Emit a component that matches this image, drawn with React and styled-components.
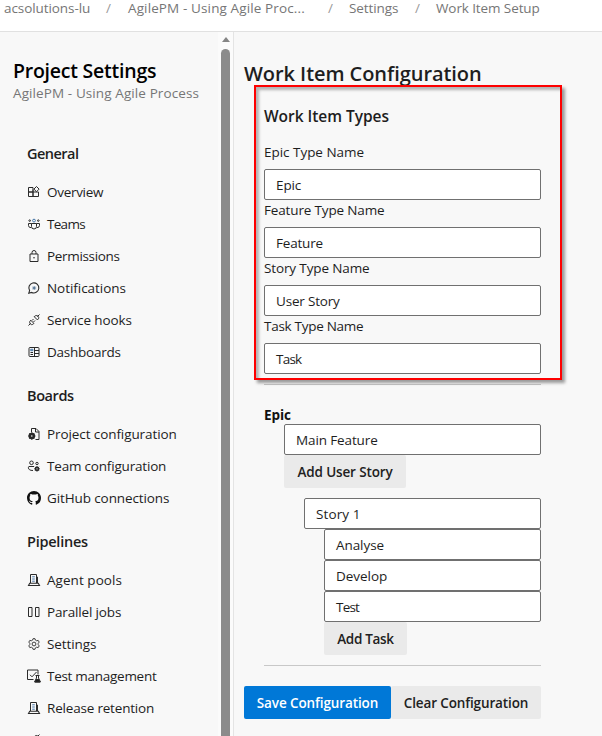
import React from 'react';
import styled, { createGlobalStyle, css } from 'styled-components';

const GlobalStyle = createGlobalStyle`
  * { box-sizing: border-box; }
  html, body { margin: 0; padding: 0; height: 100%; overflow: hidden; }
  body {
    background: #f8f8f8;
    color: #1e1e1e;
    font-family: "Open Sans", "Noto Sans", sans-serif;
    font-size: 13.5px;
    line-height: 20px;
  }
`;

const Page = styled.div`
  display: flex;
  flex-direction: column;
  height: 736px;
  width: 602px;
  overflow: hidden;
`;

const Text = styled.span`
  letter-spacing: ${(p) => p.$track || 0}px;
  white-space: pre;
`;

/* ---- breadcrumb ---- */
const Breadcrumb = styled.nav`
  display: flex;
  flex: none;
  height: 32px;
  padding: 0 0 0 4px;
  background: #fff;
  border-bottom: 1px solid #e1e1e1;
  color: #767676;
  line-height: 16px;
`;
const Crumb = styled(Text)`
  flex: none;
  width: ${(p) => p.$width}px;
`;
const Slash = styled.span`
  flex: none;
  width: ${(p) => p.$width}px;
  color: #9a9a9a;
`;

const Body = styled.div`
  display: flex;
  flex: 1;
  min-height: 0;
`;

/* ---- sidebar ---- */
const Sidebar = styled.aside`
  display: flex;
  flex: none;
  width: 234px;
  border-right: 1px solid #e4e4e4;
`;
const SideContent = styled.div`
  flex: 1;
  min-width: 0;
  overflow: hidden;
  padding: 27px 0 0 13px;
`;
const SideTitle = styled.h2`
  margin: 0;
  font-size: 19.5px;
  font-weight: 600;
  line-height: 24px;
  color: #000;
`;
const SideSubtitle = styled.div`
  color: #767676;
  line-height: 20px;
`;
const Nav = styled.div`
  padding-top: 23px;
`;
const GroupTitle = styled.h3`
  margin: 12px 0 6px;
  padding-left: 14px;
  font-size: 14.5px;
  font-weight: 600;
  line-height: 32px;
`;
const NavItem = styled.div`
  display: flex;
  align-items: center;
  height: 32px;
  padding-left: 14px;
  gap: 6px;
`;
const IconBox = styled.svg`
  flex: none;
  width: 14px;
  height: 14px;
  overflow: visible;
  fill: none;
  stroke: #2b2b2b;
  stroke-width: 1;
`;
const Scrollbar = styled.div`
  display: flex;
  flex-direction: column;
  align-items: center;
  flex: none;
  width: 15px;
  background: #fbfbfb;
`;
const ArrowUp = styled.div`
  width: 0;
  height: 0;
  margin: 5px 0 7px;
  border: 4.5px solid transparent;
  border-top: 0;
  border-bottom: 5px solid #858585;
`;
const Thumb = styled.div`
  flex: 1;
  width: 9px;
  border-radius: 5px 5px 0 0;
  background: #8b8b8b;
`;

/* ---- main ---- */
const Main = styled.main`
  flex: 1;
  padding: 28px 0 0 10px;
`;
const PageTitle = styled.h1`
  margin: 0;
  font-size: 20px;
  font-weight: 600;
  line-height: 28px;
`;
const Form = styled.div`
  width: 297px;
  padding-left: 20px;
`;
const Types = styled.section`
  position: relative;
  padding-top: 18px;
`;
const Highlight = styled.div`
  position: absolute;
  left: -10px;
  top: -3px;
  width: 308px;
  height: 295px;
  border: 2px solid #fe0000;
  box-shadow: 3px 3px 3px rgba(0, 0, 0, 0.38), inset 3px 3px 3px rgba(0, 0, 0, 0.28);
  pointer-events: none;
`;
const SectionTitle = styled.h2`
  margin: 0 0 16px;
  font-size: 15.5px;
  font-weight: 600;
  line-height: 20px;
`;
const Label = styled.div`
  height: 27px;
  line-height: 21px;
`;
const Input = styled.div`
  height: 31px;
  padding-left: 11px;
  border: 1px solid #707070;
  border-radius: 2px;
  background: #fff;
  line-height: 30px;
`;
const Rule = styled.hr`
  height: 1px;
  margin: 10px 0 0;
  border: 0;
  background: #c8c8c8;
`;
const EpicName = styled.div`
  height: 39px;
  padding-top: 20px;
  font-weight: 700;
  color: #111;
`;
const Indent = styled.div`
  margin-top: ${(p) => p.$gap || 0}px;
  padding-left: 20px;
`;
const Button = styled.button`
  display: block;
  width: ${(p) => p.$width}px;
  height: 33px;
  margin: 0;
  padding: 2px 0 0;
  border: 0;
  border-radius: 2px;
  background: #eaeaea;
  color: #212121;
  font: 600 13.5px/31px "Open Sans", "Noto Sans", sans-serif;
  text-align: center;
  ${(p) =>
    p.$primary &&
    css`
      background: #0078d7;
      color: #fff;
    `}
`;
const Actions = styled.div`
  display: flex;
  margin-top: 20px;
`;

const server = (
  <>
    <path d="M3.500 10V1.500h6V10M9.500 4h1v6" />
    <path d="M5.200 3.800h2.600M5.200 6h2.600M5.200 8.200h2.600" stroke="#4777a8" />
    <path d="M1.500 12.500l1.200-2.300h8.600l1.200 2.300z" strokeWidth="1.100" />
  </>
);
const gearTeeth =
  'M6 1.700L8 1.700 8.400 3.100 9.700 3.800 11.200 3.400 12.200 5.100 11.200 6.300V7.700L12.200 8.900 11.200 10.600 9.700 10.200 8.400 10.900 8 12.300H6L5.600 10.900 4.300 10.200 2.800 10.600 1.800 8.900 2.800 7.700V6.300L1.800 5.100 2.800 3.400 4.300 3.800 5.600 3.100z';

const icons = {
  overview: (
    <path d="M1.500 2.500h4.500v4.500h-4.500zM1.500 7h4.500v4.500h-4.500zM6 7h5.500v4.500H6zM6 4.500V7M9.500 1.500l2.600 2.600-2.600 2.600-2.600-2.600z" />
  ),
  teams: (
    <>
      <path d="M4.500 6.500h5v3a2.500 2.500 0 0 1-5 0zM4.500 6.500H1.500v2q0 2.200 2.700 2.200M9.500 6.500h3v2q0 2.200-2.700 2.200" />
      <circle cx="7" cy="3.600" r="1.400" stroke="#4777a8" />
      <circle cx="2.700" cy="3.600" r=".8" />
      <circle cx="11.300" cy="3.600" r=".8" />
    </>
  ),
  lock: (
    <>
      <path d="M3 5h8v7.500H3zM5 5V3.500a2 2 0 0 1 4 0V5" />
      <circle cx="7" cy="8.800" r=".8" fill="#2b2b2b" stroke="none" />
    </>
  ),
  bell: (
    <>
      <path d="M1.800 12.200l.8-2.600a5 5 0 1 1 2 1.800z" strokeWidth="1.100" />
      <path d="M7.200 5v4M5.200 7h4M5.900 5.700l2.600 2.600M8.500 5.700L5.900 8.300" strokeWidth=".8" stroke="#4d6f93" />
    </>
  ),
  plug: (
    <path d="M1.500 12.500l2-2M10.500 3.500l2-2M3.700 7.200l3.200 3.200-1.200 1q-1.300.7-2.400-.5-1-1.200-.5-2.400zM7.200 3.700l3.200 3.200 1.100-1.200q.7-1.300-.5-2.500-1.200-1-2.500-.5zM5 7.500l1.500-1.500M6.500 9L8 7.500" />
  ),
  dashboard: (
    <>
      <rect x="2" y="2.500" width="10" height="9" rx="1" />
      <path d="M7.500 2.500v9M7.500 5.500H12M7.500 8.500H12M3.500 7.500h2.500M3.500 9.500h2.500" />
      <path d="M3.700 4.300h2.200v1.400H3.700z" stroke="#4777a8" />
    </>
  ),
  project: (
    <>
      <path d="M4.500 5V1.500H9l3 3v8H8.500M8.500 1.500V5H12" />
      <circle cx="4.800" cy="9" r="2.300" strokeWidth="2" />
      <path d="M4.800 5.300v7.400M1.100 9h7.400M2.300 6.500l5 5M7.300 6.500l-5 5" strokeWidth="1.200" />
      <circle cx="4.800" cy="9" r=".8" fill="#f8f8f8" stroke="none" />
    </>
  ),
  team: (
    <>
      <circle cx="4.500" cy="3.800" r="1.800" />
      <circle cx="10" cy="4.500" r="1.200" />
      <path d="M7 7.500H2q-.6 0-.6 1.200Q1.500 11.500 6 11.500" />
      <circle cx="10" cy="9.800" r="1.600" strokeWidth="1.500" />
      <path d="M10 7v5.600M7.200 9.800h5.600M8 7.800l4 4M12 7.800l-4 4" strokeWidth=".9" />
      <circle cx="10" cy="9.800" r=".6" fill="#f8f8f8" stroke="none" />
    </>
  ),
  github: (
    <path
      transform="scale(.875)"
      fill="#111"
      stroke="none"
      d="M8 0C3.580 0 0 3.580 0 8c0 3.540 2.290 6.530 5.470 7.590.4.070.55-.17.55-.38 0-.19-.01-.82-.01-1.490-2.010.37-2.530-.49-2.690-.94-.09-.23-.48-.94-.82-1.130-.28-.15-.68-.52-.01-.53.63-.01 1.080.58 1.230.82.72 1.210 1.870.87 2.330.66.070-.52.28-.87.51-1.070-1.780-.2-3.640-.89-3.640-3.950 0-.87.31-1.590.82-2.150-.08-.2-.36-1.020.08-2.120 0 0 .67-.21 2.200.82.64-.18 1.320-.27 2-.27s1.360.09 2 .27c1.530-1.040 2.200-.82 2.200-.82.44 1.100.16 1.920.08 2.120.51.56.82 1.270.82 2.150 0 3.070-1.870 3.750-3.650 3.950.29.25.54.73.54 1.480 0 1.070-.01 1.930-.01 2.200 0 .21.15.46.55.38A8.010 8.010 0 0 0 16 8c0-4.420-3.580-8-8-8z"
    />
  ),
  server,
  parallel: <path d="M1.500 2.500h3.500v9h-3.500zM8.500 2.500h3.500v9h-3.500z" />,
  gear: (
    <>
      <path d={gearTeeth} strokeWidth=".9" />
      <circle cx="7" cy="7" r="1.900" strokeWidth=".9" />
    </>
  ),
  test: (
    <>
      <path d="M6.500 10.500H.5V1h10.500v4.500M3 5.800l2 2L9.500 3" />
      <path d="M8.500 6.500h4M9.500 6.500v2.500l-2 4h6l-2-4V6.500" />
      <path d="M9 10.500h3l1 2.500H8z" fill="#1e1e1e" />
    </>
  ),
};

const groups = [
  {
    title: 'General', track: -0.52,
    items: [
      ['Overview', 'overview', -0.3],
      ['Teams', 'teams', -0.7],
      ['Permissions', 'lock', -0.33],
      ['Notifications', 'bell', -0.05],
      ['Service hooks', 'plug', -0.12],
      ['Dashboards', 'dashboard', -0.24],
    ],
  },
  {
    title: 'Boards', track: -0.42,
    items: [
      ['Project configuration', 'project', -0.09],
      ['Team configuration', 'team', -0.19],
      ['GitHub connections', 'github', -0.11],
    ],
  },
  {
    title: 'Pipelines', track: -0.25,
    items: [
      ['Agent pools', 'server', 0.05],
      ['Parallel jobs', 'parallel', -0.15],
      ['Settings', 'gear', -0.09],
      ['Test management', 'test', -0.28],
      ['Release retention', 'server', -0.19],
      ['Service connections', 'plug', -0.15],
    ],
  },
];

const typeFields = [
  ['Epic Type Name', -0.03, 'Epic', -0.1],
  ['Feature Type Name', -0.15, 'Feature', -0.19],
  ['Story Type Name', -0.13, 'User Story', -0.19],
  ['Task Type Name', -0.28, 'Task', -0.75],
];

const tasks = [
  ['Analyse', -0.07],
  ['Develop', -0.04],
  ['Test', -0.78],
];

export default function App() {
  return (
    <Page>
      <GlobalStyle />
      <Breadcrumb>
        <Crumb $width={102} $track={-0.08}>acsolutions-lu</Crumb>
        <Slash $width={22}>/</Slash>
        <Crumb $width={200} $track={0.12}>AgilePM - Using Agile Proc...</Crumb>
        <Slash $width={21}>/</Slash>
        <Crumb $width={66} $track={-0.09}>Settings</Crumb>
        <Slash $width={21}>/</Slash>
        <Crumb $width={110} $track={-0.1}>Work Item Setup</Crumb>
      </Breadcrumb>
      <Body>
        <Sidebar>
          <SideContent>
            <SideTitle><Text $track={-0.23}>Project Settings</Text></SideTitle>
            <SideSubtitle><Text $track={0.1}>AgilePM - Using Agile Process</Text></SideSubtitle>
            <Nav>
              {groups.map((g) => (
                <React.Fragment key={g.title}>
                  <GroupTitle><Text $track={g.track}>{g.title}</Text></GroupTitle>
                  {g.items.map(([name, icon, track]) => (
                    <NavItem key={name}>
                      <IconBox viewBox="0 0 14 14">{icons[icon]}</IconBox>
                      <Text $track={track}>{name}</Text>
                    </NavItem>
                  ))}
                </React.Fragment>
              ))}
            </Nav>
          </SideContent>
          <Scrollbar>
            <ArrowUp />
            <Thumb />
          </Scrollbar>
        </Sidebar>
        <Main>
          <PageTitle><Text $track={-0.06}>Work Item Configuration</Text></PageTitle>
          <Form>
            <Types>
              <SectionTitle><Text $track={-0.04}>Work Item Types</Text></SectionTitle>
              {typeFields.map(([label, lt, value, vt]) => (
                <React.Fragment key={label}>
                  <Label><Text $track={lt}>{label}</Text></Label>
                  <Input><Text $track={vt}>{value}</Text></Input>
                </React.Fragment>
              ))}
              <Highlight />
            </Types>
            <Rule />
            <EpicName><Text $track={-0.07}>Epic</Text></EpicName>
            <Indent>
              <Input><Text $track={-0.12}>Main Feature</Text></Input>
              <Button $width={122}><Text $track={-0.14}>Add User Story</Text></Button>
              <Indent $gap={10}>
                <Input><Text $track={0.1}>Story 1</Text></Input>
                <Indent>
                  {tasks.map(([name, track]) => (
                    <Input key={name}><Text $track={track}>{name}</Text></Input>
                  ))}
                  <Button $width={83}><Text $track={-0.32}>Add Task</Text></Button>
                </Indent>
              </Indent>
            </Indent>
            <Rule />
          </Form>
          <Actions>
            <Button $primary $width={147}><Text $track={-0.11}>Save Configuration</Text></Button>
            <Button $width={150}><Text $track={-0.13}>Clear Configuration</Text></Button>
          </Actions>
        </Main>
      </Body>
    </Page>
  );
}
